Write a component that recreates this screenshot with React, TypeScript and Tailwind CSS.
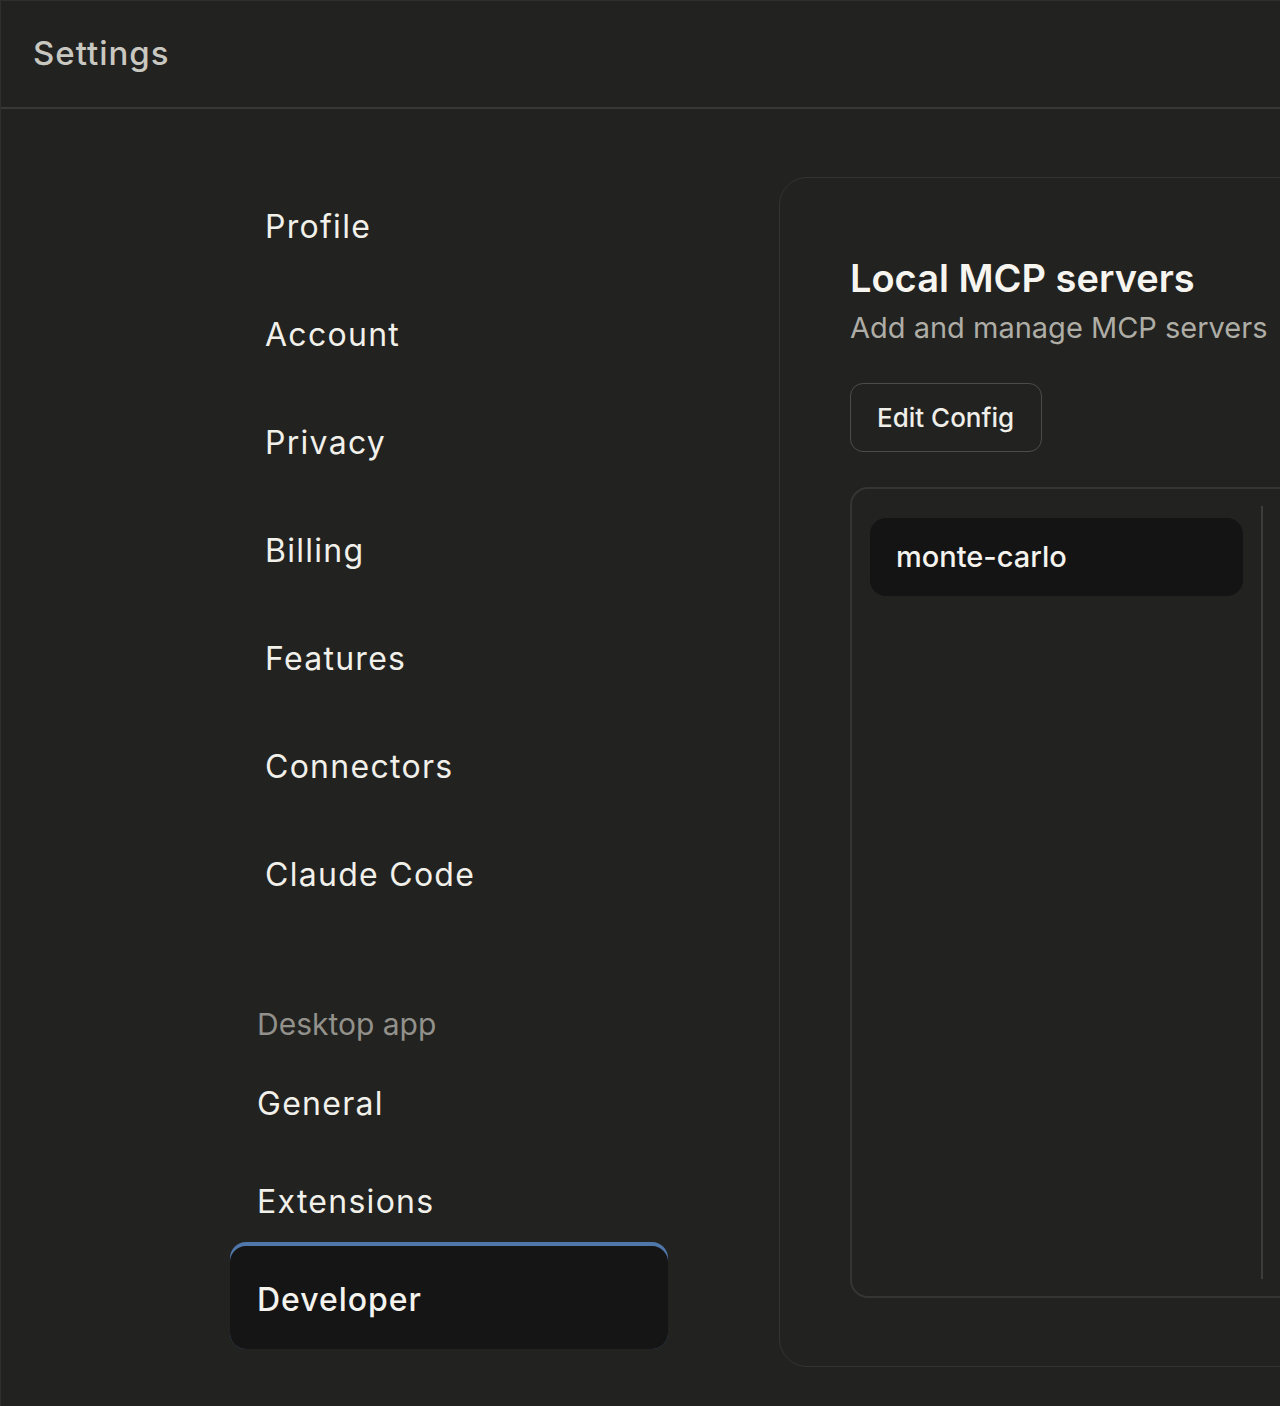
import React from "react";

const font = { fontFamily: "Inter, 'Noto Sans', 'Liberation Sans', sans-serif" };

function NavItem({ label }: { label: string }) {
  return (
    <div className="flex h-[108px] items-center pl-[35px] text-[32px] leading-none text-[#f1f0ea] tracking-[0.04em]">
      {label}
    </div>
  );
}

export default function App() {
  const top = ["Profile", "Account", "Privacy", "Billing", "Features", "Connectors", "Claude Code"];
  return (
    <div
      className="h-[1406px] w-[1280px] overflow-hidden border-t border-l border-[#2f2f2d] bg-[#222220] antialiased"
      style={font}
    >
      <header className="flex h-[108px] items-center border-b-2 border-[#383836] pl-[32px]">
        <span className="text-[33px] font-medium text-[#c9c8c0] tracking-[0.03em]">Settings</span>
      </header>
      <div className="flex">
        <nav className="ml-[229px] w-[438px] shrink-0 pt-[64px]">
          {top.map((t) => (
            <NavItem key={t} label={t} />
          ))}
          <div className="mt-[75px] flex h-[40px] items-center pl-[27px] text-[30px] text-[#92918b]">
            Desktop app
          </div>
          <div className="mt-[10px] flex h-[99px] items-center pl-[27px] text-[32px] text-[#f1f0ea] tracking-[0.04em]">
            General
          </div>
          <div className="flex h-[89px] items-center pt-[9px] pl-[27px] text-[32px] text-[#f1f0ea] tracking-[0.04em]">
            Extensions
          </div>
          <div className="h-[107px] rounded-[16px] bg-[#4f77aa] pt-[4px]">
            <div className="flex h-[103px] items-center rounded-[16px] bg-[#151515] pt-[4px] pl-[27px] text-[32px] font-medium text-[#f4f3ee] tracking-[0.03em]">
              Developer
            </div>
          </div>
        </nav>
        <main className="ml-[111px] mt-[68px] flex h-[1190px] w-[700px] shrink-0 flex-col rounded-[28px] border border-[#343432] bg-[#222220] pl-[70px] pt-[76px] pb-[68px]">
          <h1 className="text-[38px] font-semibold leading-[48px] text-[#f6f5f0]">Local MCP servers</h1>
          <p className="mt-[6px] whitespace-nowrap text-[29px] leading-[40px] text-[#aeada6]">Add and manage MCP servers</p>
          <div className="mt-[35px]">
            <button className="flex h-[69px] w-[192px] items-center rounded-[13px] border border-[#4c4c4a] pl-[26px] text-[26px] font-medium text-[#efeee8]">
              Edit Config
            </button>
          </div>
          <div className="mt-[35px] flex flex-1 rounded-[18px] border-2 border-[#353533] p-[17px]">
            <div className="w-[394px] shrink-0 border-r-2 border-[#3d3d3b] pt-[12px] pr-[18px] pl-[1px]">
              <div className="flex h-[78px] items-center rounded-[16px] bg-[#141414] pl-[26px] text-[29px] font-medium text-[#f4f3ee]">
                monte-carlo
              </div>
            </div>
          </div>
        </main>
      </div>
    </div>
  );
}
